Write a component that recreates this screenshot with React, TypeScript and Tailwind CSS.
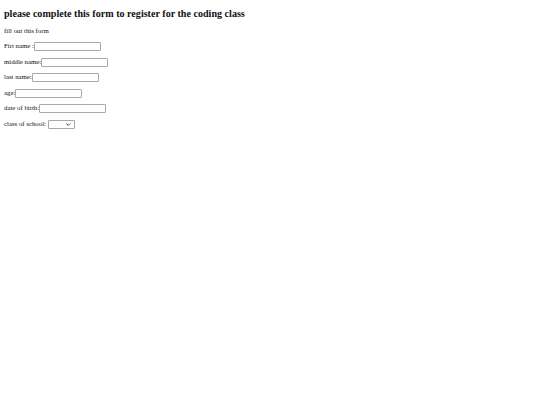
import React from 'react';

const rows: Array<{ label: string; width: string }> = [
  { label: 'Firt name :', width: 'w-[67px]' },
  { label: 'middle name:', width: 'w-[67px]' },
  { label: 'last name:', width: 'w-[67px]' },
  { label: 'age:', width: 'w-[67px]' },
  { label: 'date of birth:', width: 'w-[67px]' },
];

export default function App() {
  return (
    <div className="min-h-[405px] w-[540px] bg-white px-[4px] pt-[8px] text-[#111] font-['Liberation_Serif','Times_New_Roman',serif]">
      <h3 className="h-[12px] text-[10.1px] font-bold leading-[12px]">
        please complete this form to register for the coding class
      </h3>
      <form className="mt-[6px] flex flex-col gap-[5.5px] text-[6.8px]">
        <p className="flex h-[10px] items-center">fill out this form</p>
        {rows.map((row) => (
          <label key={row.label} className="flex h-[10px] items-center">
            <span>{row.label}</span>
            <input
              type="text"
              className={`${row.width} h-[9px] rounded-[1px] border border-[#a8a8a8] bg-white`}
            />
          </label>
        ))}
        <label className="flex h-[10px] items-center">
          <span className="whitespace-pre">class of school: </span>
          <span className="relative flex h-[9px] w-[27px] items-center rounded-[1px] border border-[#a8a8a8] bg-white">
            <select className="h-full w-full appearance-none bg-transparent outline-none" defaultValue="">
              <option value=""></option>
              <option value="a">A</option>
            </select>
            <svg
              viewBox="0 0 10 6"
              className="pointer-events-none absolute right-[3px] top-[2.5px] h-[3px] w-[4.5px]"
            >
              <path d="M1 1l4 4 4-4" fill="none" stroke="#222" strokeWidth="2" />
            </svg>
          </span>
        </label>
      </form>
    </div>
  );
}
